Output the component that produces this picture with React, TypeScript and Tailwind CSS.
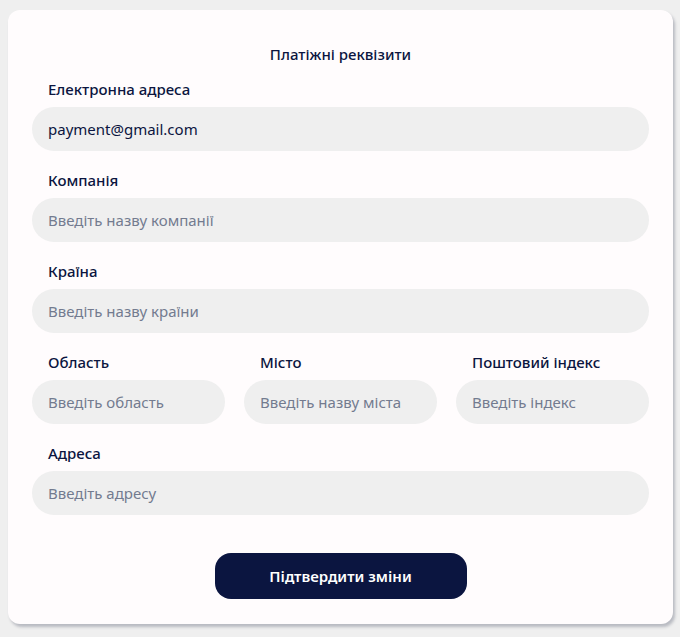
const font = { fontFamily: '"Noto Sans", "Open Sans", sans-serif' }

function Field({
  label,
  placeholder,
  value,
}: {
  label: string
  placeholder?: string
  value?: string
}) {
  return (
    <div className="flex flex-col">
      <label className="h-5 px-4 text-[15px] leading-5 font-medium text-[#0b1540]">
        {label}
      </label>
      <input
        className="mt-2 h-11 w-full rounded-[22px] bg-[#efefef] px-4 text-[15px] text-[#0b1540] placeholder:text-[#737b8f] outline-none"
        placeholder={placeholder}
        defaultValue={value}
        style={font}
      />
    </div>
  )
}

export default function App() {
  return (
    <div className="min-h-[637px] bg-[#efefef] pt-[10px] pl-2 pr-[7px]" style={font}>
      <div className="flex flex-col rounded-xl bg-[#fffcfd] px-6 pt-[34px] pb-[25px] shadow-[2px_3px_3px_rgba(60,66,90,0.3)]">
        <h1 className="h-5 text-center text-[15px] leading-5 font-medium text-[#0b1540]">
          Платіжні реквізити
        </h1>
        <div className="mt-[15px] flex flex-col gap-[19px]">
          <Field label="Електронна адреса" value="payment@gmail.com" />
          <Field label="Компанія" placeholder="Введіть назву компанії" />
          <Field label="Країна" placeholder="Введіть назву країни" />
          <div className="grid grid-cols-3 gap-[19px]">
            <Field label="Область" placeholder="Введіть область" />
            <Field label="Місто" placeholder="Введіть назву міста" />
            <Field label="Поштовий індекс" placeholder="Введіть індекс" />
          </div>
          <Field label="Адреса" placeholder="Введіть адресу" />
        </div>
        <button className="mx-auto mt-[38px] h-[46px] w-[252px] rounded-2xl bg-[#0b1540] text-[15px] font-semibold text-white">
          Підтвердити зміни
        </button>
      </div>
    </div>
  )
}
